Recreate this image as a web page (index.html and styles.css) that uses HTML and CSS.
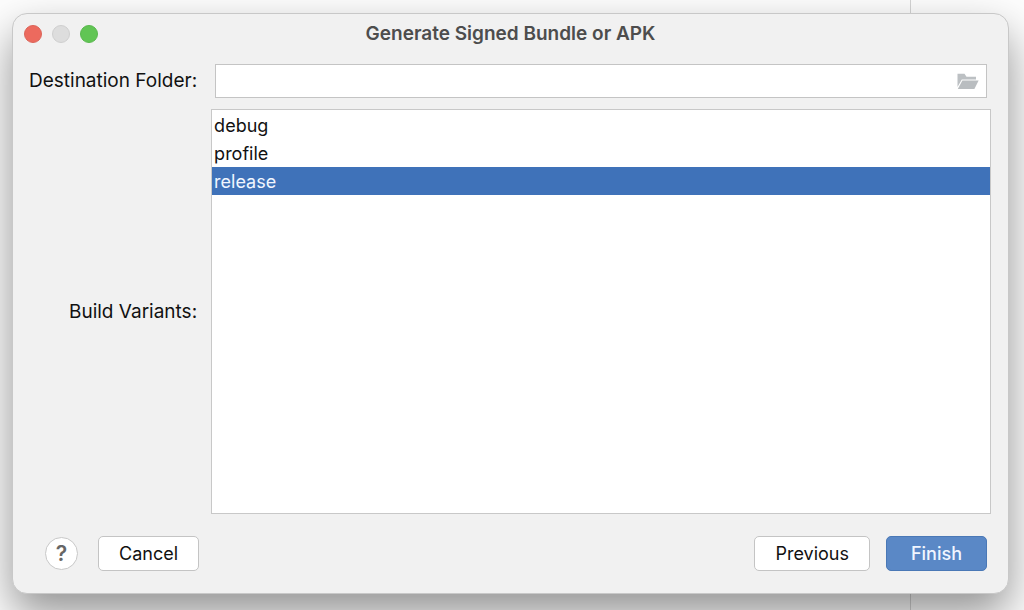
FILE: index.html
```html
<!DOCTYPE html>
<html lang="en">
<head>
<meta charset="utf-8">
<meta name="viewport" content="width=device-width, initial-scale=1">
<title>Generate Signed Bundle or APK</title>
<link rel="stylesheet" href="styles.css">
</head>
<body>
<main class="dialog" role="dialog" aria-labelledby="dialog-title">
  <header class="titlebar">
    <div class="lights">
      <button class="light light-close" type="button" aria-label="Close"></button>
      <button class="light light-min" type="button" aria-label="Minimize" disabled></button>
      <button class="light light-zoom" type="button" aria-label="Zoom"></button>
    </div>
    <h1 class="title" id="dialog-title">Generate Signed Bundle or APK</h1>
  </header>
  <form class="form">
    <label class="label" for="destination">Destination Folder:</label>
    <div class="field">
      <input class="field-input" id="destination" type="text">
      <button class="browse" type="button" aria-label="Browse">
        <svg class="browse-icon" viewBox="0 0 22 17" aria-hidden="true">
          <path d="M0.5 0.8h7l2 3h9.5v2.6H4.8L0.5 14z" fill="#bcc0c3"/>
          <path d="M5.4 7.4H21.6L17.4 16H0.8z" fill="#b9bdc0"/>
        </svg>
      </button>
    </div>
    <label class="label" for="variants">Build Variants:</label>
    <select class="list" id="variants" multiple>
      <option class="item">debug</option>
      <option class="item">profile</option>
      <option class="item" selected>release</option>
    </select>
  </form>
  <footer class="footer">
    <button class="help" type="button" aria-label="Help">?</button>
    <button class="button" type="button">Cancel</button>
    <button class="button button-previous" type="button">Previous</button>
    <button class="button button-primary" type="button">Finish</button>
  </footer>
</main>
</body>
</html>
```
FILE: styles.css
```css
* {
  box-sizing: border-box;
}

body {
  margin: 0;
  min-height: 100vh;
  display: flex;
  padding: 13px 15px 16px 12px;
  overflow: hidden;
  font-family: Inter, "Liberation Sans", sans-serif;
  font-size: 18px;
  line-height: 28px;
  color: #111;
  background: linear-gradient(#d4d4d4, #d4d4d4) right 113px top / 1px 100% no-repeat #fdfdfd;
}

button,
input,
select {
  font: inherit;
  color: inherit;
}

.dialog {
  flex: 1;
  display: flex;
  flex-direction: column;
  border: 1px solid #c8c8c8;
  border-radius: 15px;
  background: #f1f1f1;
  box-shadow: 0 20px 44px rgba(0, 0, 0, 0.42);
}

.titlebar {
  display: grid;
  grid-template-columns: 1fr auto 1fr;
  align-items: center;
  height: 40px;
  padding: 0 11px;
}

.lights {
  display: flex;
  gap: 10px;
}

.light {
  width: 18px;
  height: 18px;
  padding: 0;
  border: 1px solid;
  border-radius: 50%;
}

.light-close {
  background: #ec6a5e;
  border-color: #dc6459;
}

.light-min {
  background: #dddddd;
  border-color: #cfcfcf;
}

.light-zoom {
  background: #61c554;
  border-color: #59b84d;
}

.title {
  margin: 0;
  font-size: 19px;
  font-weight: 600;
  color: #4d4d4d;
}

.form {
  flex: 1;
  display: grid;
  grid-template-columns: auto 1fr;
  grid-template-rows: auto 1fr;
  gap: 11px 14px;
  align-items: center;
  padding: 10px 17px 0 16px;
}

.label {
  font-size: 19px;
  text-align: right;
}

.field {
  display: flex;
  align-items: center;
  height: 34px;
  margin: 0 4px;
  border: 1px solid #c4c4c4;
  background: #fff;
}

.field-input {
  flex: 1;
  min-width: 0;
  padding: 0 6px;
  border: 0;
  outline: 0;
  background: none;
}

.browse {
  display: flex;
  padding: 0 7px;
  border: 0;
  background: none;
}

.browse-icon {
  width: 22px;
  height: 17px;
}

.list {
  appearance: none;
  width: 100%;
  height: 100%;
  padding: 1px 0;
  border: 1px solid #c8c8c8;
  border-radius: 0;
  outline: 0;
  background: #fff;
}

.item {
  min-height: 28px;
  padding: 4px 2px 0;
}

.item:checked {
  color: #f0f6ff;
  background: #3f72b9 linear-gradient(#3f72b9, #3f72b9);
}

.footer {
  display: flex;
  align-items: center;
  gap: 16px;
  padding: 22px 21px 22px 32px;
}

.help {
  width: 33px;
  height: 33px;
  padding: 0;
  border: 1px solid #c8c8c8;
  border-radius: 50%;
  background: #fff;
  font-size: 21px;
  font-weight: 600;
  color: #666;
}

.button {
  height: 35px;
  padding: 0 20px;
  border: 1px solid #c4c4c4;
  border-radius: 5px;
  background: #fff;
}

.help + .button {
  margin-left: 4px;
}

.button-previous {
  margin-left: auto;
}

.button-primary {
  padding: 0 24px;
  border-color: #4a78b6;
  background: #5a88c6;
  color: #f0f6ff;
  font-weight: 500;
}
```
